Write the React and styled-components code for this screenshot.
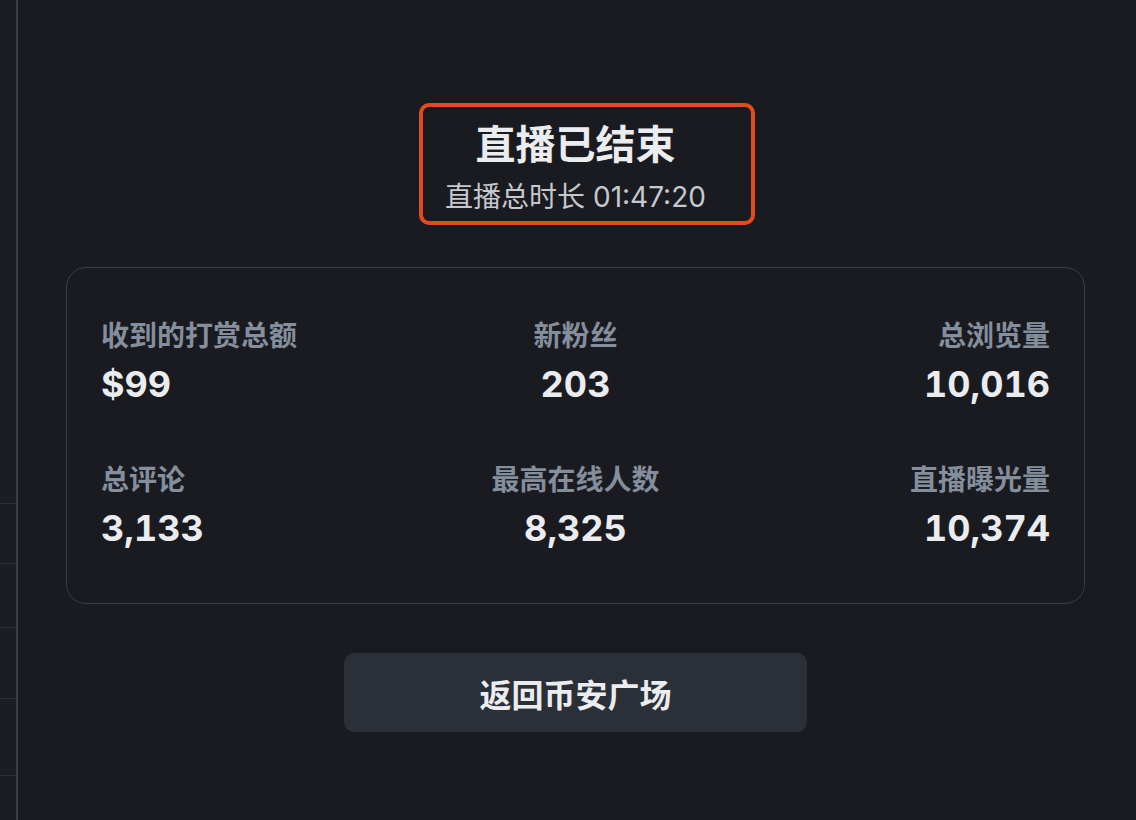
import styled, { createGlobalStyle } from "styled-components"

const GlobalStyle = createGlobalStyle`
    html, body {
        margin: 0;
        padding: 0;
        background: #1a1b20;
    }
    body {
        font-family: Inter, "Noto Sans CJK SC", sans-serif;
        color: #eaecef;
    }
`;

const StyledPage = styled.div`
    display: flex;
    width: 100%;
    min-height: 820px;
    background: #1a1b20;
`;

const SideRail = styled.div`
    width: 16px;
    flex-shrink: 0;
    display: flex;
    flex-direction: column;
    background: #1c1d22;
    border-right: 2px solid #3a3d48;
`;

const RailRow = styled.div`
    height: ${(p) => p.height}px;
    border-top: ${(p) => (p.line ? "1px solid #2c2e35" : "none")};
`;

const Main = styled.div`
    flex: 1;
    display: flex;
    flex-direction: column;
    align-items: center;
    padding: 103px 51px 0 48px;
`;

/* the outlined block sits a little right of the page centre, its text does not */
const Heading = styled.div`
    width: 336px;
    height: 122px;
    margin-left: 22px;
    box-sizing: border-box;
    border: 4px solid #e24a1f;
    border-radius: 10px;
    display: flex;
    flex-direction: column;
    align-items: center;
    padding: 14px 22px 0 0;
    gap: 10px;
`;

const Title = styled.div`
    font-size: 40px;
    line-height: 48px;
    font-weight: 700;
    color: #eaecef;
`;

const Duration = styled.div`
    font-size: 28px;
    line-height: 36px;
    font-weight: 400;
    color: #c5c8ce;
`;

const StatsCard = styled.div`
    width: 100%;
    box-sizing: border-box;
    margin-top: 42px;
    border: 1px solid #3a3d48;
    border-radius: 20px;
    padding: 50px 34px 53px;
    display: grid;
    grid-template-columns: 1fr 1fr 1fr;
    row-gap: 56px;
`;

const Stat = styled.div`
    display: flex;
    flex-direction: column;
    gap: 8px;
    align-items: ${(p) =>
        p.align === "center" ? "center" : p.align === "right" ? "flex-end" : "flex-start"};
`;

const StatLabel = styled.div`
    font-size: 28px;
    line-height: 36px;
    font-weight: 700;
    color: #848e9c;
`;

const StatValue = styled.div`
    font-size: 36px;
    line-height: 44px;
    font-weight: 700;
    color: #eaecef;
    font-feature-settings: "tnum";
`;

const BackButton = styled.button`
    margin-top: 49px;
    width: 463px;
    height: 79px;
    border: none;
    border-radius: 10px;
    background: #2b2f37;
    color: #eaecef;
    font-family: Inter, "Noto Sans CJK SC", sans-serif;
    font-size: 32px;
    font-weight: 700;
    cursor: pointer;
`;

const stats = [
    { label: "收到的打赏总额", value: "$99", align: "left" },
    { label: "新粉丝", value: "203", align: "center" },
    { label: "总浏览量", value: "10,016", align: "right" },
    { label: "总评论", value: "3,133", align: "left" },
    { label: "最高在线人数", value: "8,325", align: "center" },
    { label: "直播曝光量", value: "10,374", align: "right" },
];

const railRows = [
    { height: 503 },
    { height: 59, line: true },
    { height: 63, line: true },
    { height: 70, line: true },
    { height: 76, line: true },
    { height: 49, line: true },
];

export default function App() {
    return (
        <StyledPage>
            <GlobalStyle />
            <SideRail>
                {railRows.map((r, i) => (
                    <RailRow key={i} height={r.height} line={r.line} />
                ))}
            </SideRail>
            <Main>
                <Heading>
                    <Title>直播已结束</Title>
                    <Duration>直播总时长 01:47:20</Duration>
                </Heading>
                <StatsCard>
                    {stats.map((s) => (
                        <Stat key={s.label} align={s.align}>
                            <StatLabel>{s.label}</StatLabel>
                            <StatValue>{s.value}</StatValue>
                        </Stat>
                    ))}
                </StatsCard>
                <BackButton>返回币安广场</BackButton>
            </Main>
        </StyledPage>
    );
}
